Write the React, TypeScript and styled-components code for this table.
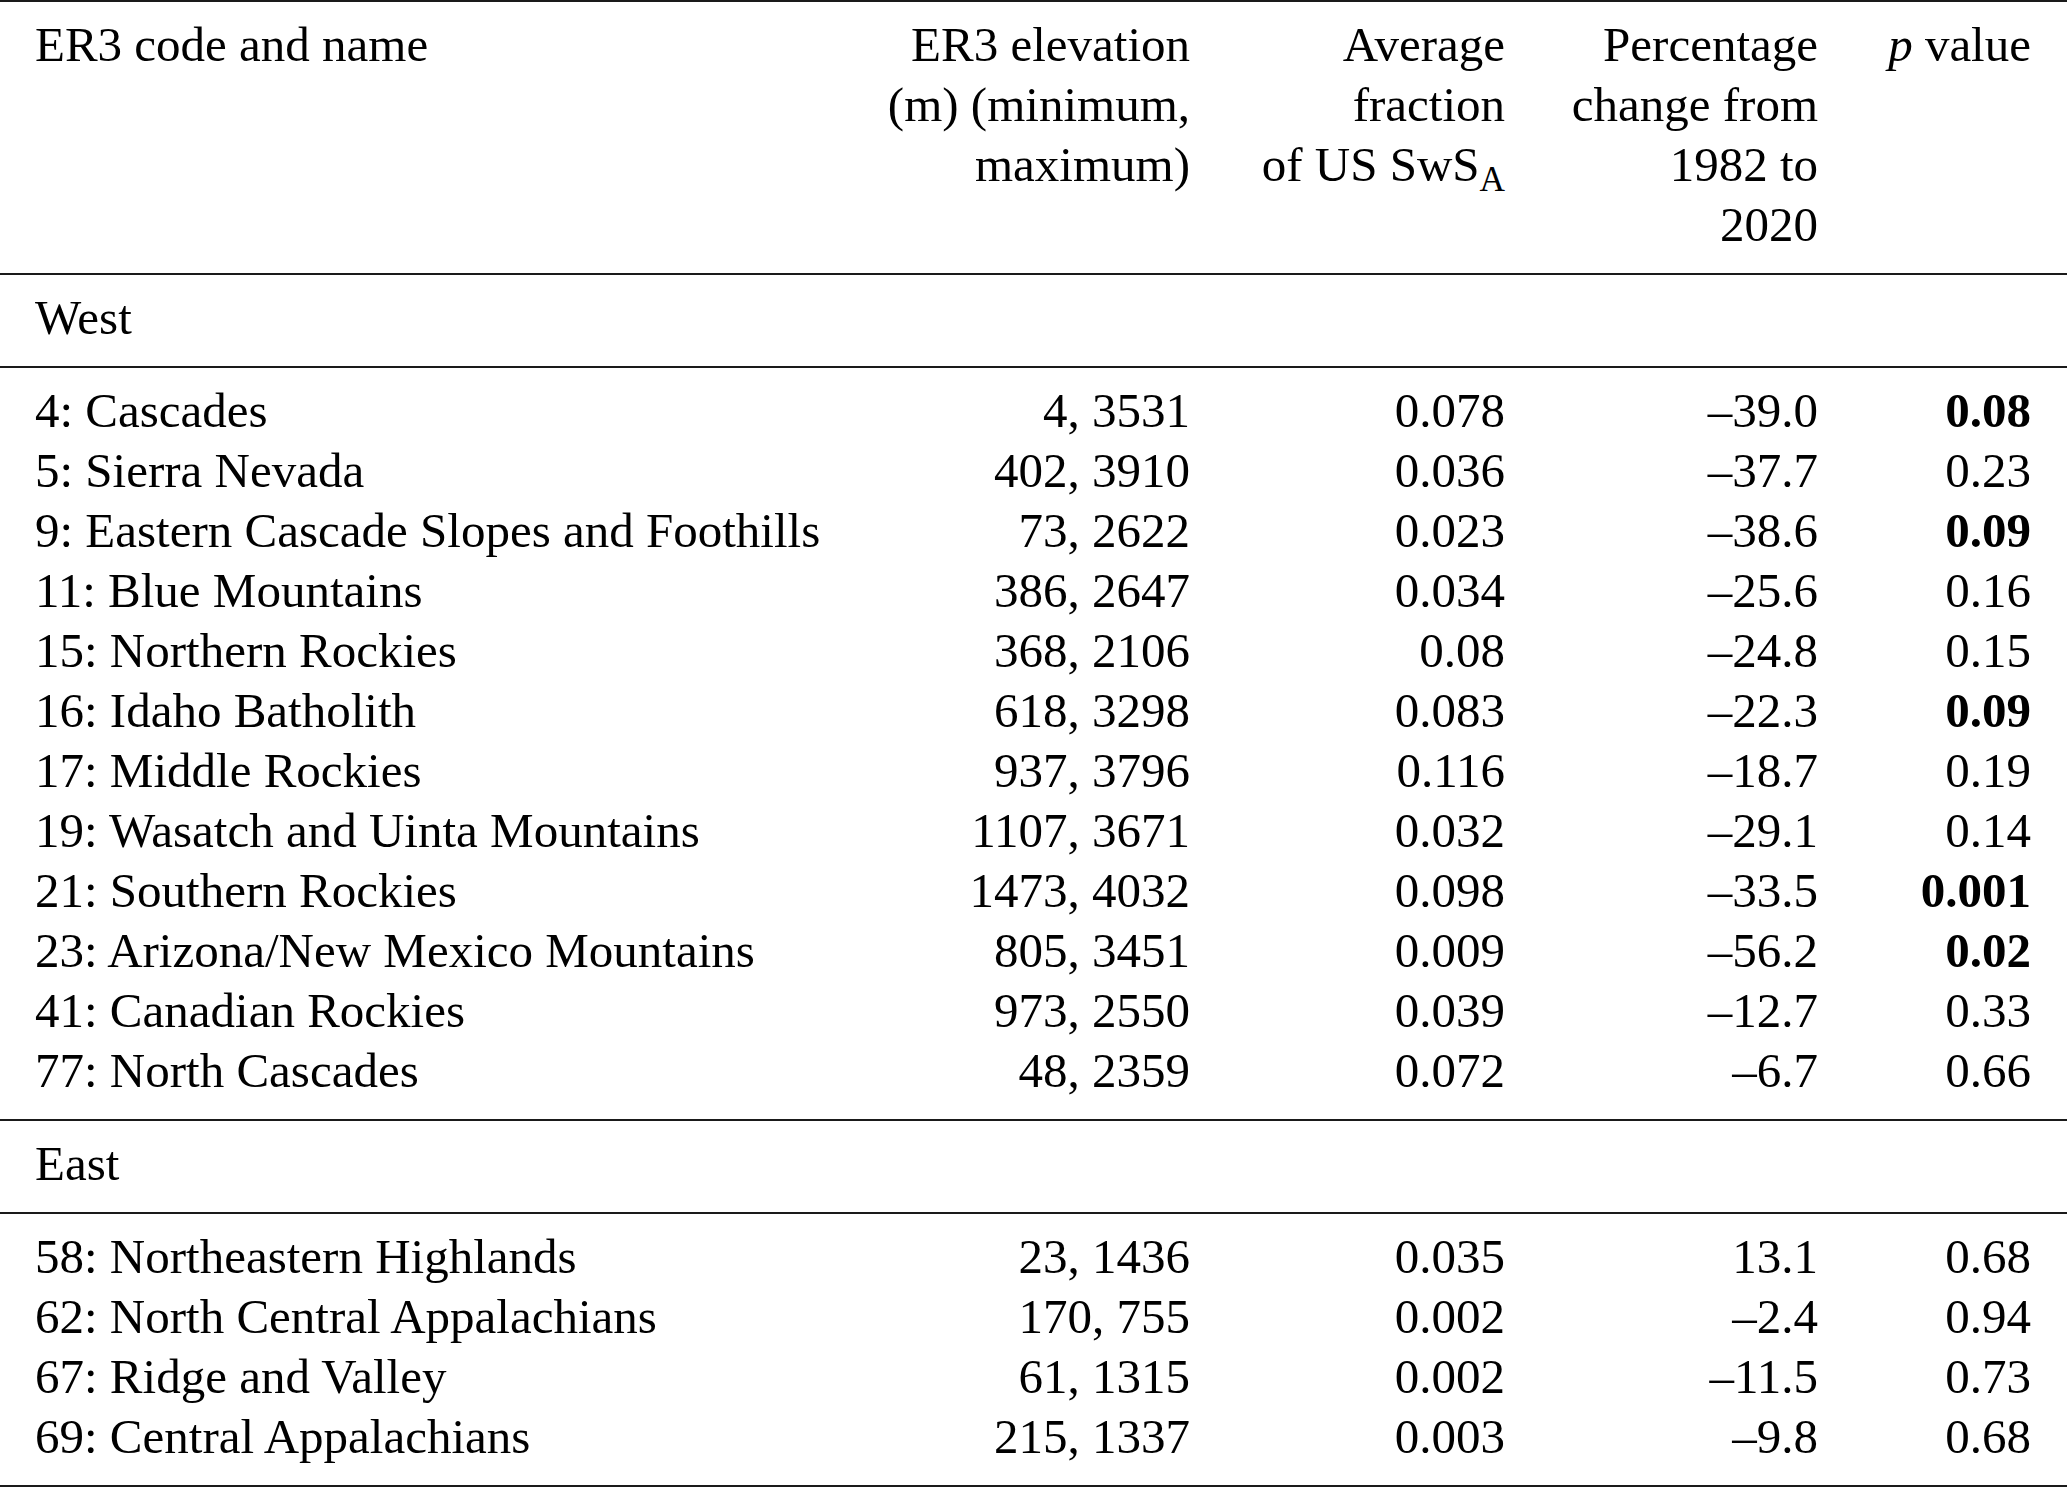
import React from "react";
import styled, { createGlobalStyle } from "styled-components";

const Global = createGlobalStyle`
  html, body { margin: 0; padding: 0; background: #ffffff; }
  body { font-family: "Liberation Serif", "Times New Roman", serif; color: #000; }
`;

const Table = styled.table`
  width: 2067px;
  border-collapse: collapse;
  table-layout: fixed;
  font-family: "Liberation Serif", "Times New Roman", serif;
  font-size: 49px;
  line-height: 60px;
  color: #000;
`;

const Col = styled.col<{ $w: number }>`
  width: ${(p) => p.$w}px;
`;

const Group = styled.tbody`
  border-top: 2px solid #1a1a1a;
  &:last-child {
    border-bottom: 2px solid #1a1a1a;
  }
`;

const Head = styled.thead`
  border-top: 2px solid #1a1a1a;
`;

const Cell = styled.td<{ $right?: boolean; $first?: boolean; $last?: boolean; $padTop?: boolean; $padBottom?: boolean; $bold?: boolean }>`
  padding: 0;
  padding-left: ${(p) => (p.$first ? "35px" : "0")};
  padding-right: ${(p) => (p.$last ? "36px" : "0")};
  padding-top: ${(p) => (p.$padTop ? "13px" : "0")};
  padding-bottom: ${(p) => (p.$padBottom ? "18px" : "0")};
  text-align: ${(p) => (p.$right ? "right" : "left")};
  font-weight: ${(p) => (p.$bold ? 700 : 400)};
  vertical-align: top;
  white-space: nowrap;
  height: 60px;
`;

const HeadCell = styled.th<{ $right?: boolean; $first?: boolean; $last?: boolean }>`
  padding: 13px 0 18px 0;
  padding-left: ${(p) => (p.$first ? "35px" : "0")};
  padding-right: ${(p) => (p.$last ? "36px" : "0")};
  text-align: ${(p) => (p.$right ? "right" : "left")};
  font-weight: 400;
  vertical-align: top;
  white-space: nowrap;
`;

const Italic = styled.i`
  font-style: italic;
`;

const Sub = styled.sub`
  font-size: 72%;
  vertical-align: -0.28em;
  line-height: 0;
`;

type Row = [string, string, string, string, string, boolean];

const west: Row[] = [
  ["4: Cascades", "4, 3531", "0.078", "–39.0", "0.08", true],
  ["5: Sierra Nevada", "402, 3910", "0.036", "–37.7", "0.23", false],
  ["9: Eastern Cascade Slopes and Foothills", "73, 2622", "0.023", "–38.6", "0.09", true],
  ["11: Blue Mountains", "386, 2647", "0.034", "–25.6", "0.16", false],
  ["15: Northern Rockies", "368, 2106", "0.08", "–24.8", "0.15", false],
  ["16: Idaho Batholith", "618, 3298", "0.083", "–22.3", "0.09", true],
  ["17: Middle Rockies", "937, 3796", "0.116", "–18.7", "0.19", false],
  ["19: Wasatch and Uinta Mountains", "1107, 3671", "0.032", "–29.1", "0.14", false],
  ["21: Southern Rockies", "1473, 4032", "0.098", "–33.5", "0.001", true],
  ["23: Arizona/New Mexico Mountains", "805, 3451", "0.009", "–56.2", "0.02", true],
  ["41: Canadian Rockies", "973, 2550", "0.039", "–12.7", "0.33", false],
  ["77: North Cascades", "48, 2359", "0.072", "–6.7", "0.66", false],
];

const east: Row[] = [
  ["58: Northeastern Highlands", "23, 1436", "0.035", "13.1", "0.68", false],
  ["62: North Central Appalachians", "170, 755", "0.002", "–2.4", "0.94", false],
  ["67: Ridge and Valley", "61, 1315", "0.002", "–11.5", "0.73", false],
  ["69: Central Appalachians", "215, 1337", "0.003", "–9.8", "0.68", false],
];

function DataRows({ rows }: { rows: Row[] }) {
  return (
    <>
      {rows.map((r, i) => {
        const t = i === 0;
        const b = i === rows.length - 1;
        return (
          <tr key={r[0]}>
            <Cell $first $padTop={t} $padBottom={b}>{r[0]}</Cell>
            <Cell $right $padTop={t} $padBottom={b}>{r[1]}</Cell>
            <Cell $right $padTop={t} $padBottom={b}>{r[2]}</Cell>
            <Cell $right $padTop={t} $padBottom={b}>{r[3]}</Cell>
            <Cell $right $last $padTop={t} $padBottom={b} $bold={r[5]}>{r[4]}</Cell>
          </tr>
        );
      })}
    </>
  );
}

function Section({ name }: { name: string }) {
  return (
    <Group>
      <tr>
        <Cell $first $padTop $padBottom colSpan={5}>{name}</Cell>
      </tr>
    </Group>
  );
}

export default function App() {
  return (
    <>
      <Global />
      <Table>
        <colgroup>
          <Col $w={860} />
          <Col $w={330} />
          <Col $w={315} />
          <Col $w={313} />
          <Col $w={249} />
        </colgroup>
        <Head>
          <tr>
            <HeadCell $first>ER3 code and name</HeadCell>
            <HeadCell $right>
              ER3 elevation
              <br />
              (m) (minimum,
              <br />
              maximum)
            </HeadCell>
            <HeadCell $right>
              Average
              <br />
              fraction
              <br />
              of US SwS<Sub>A</Sub>
            </HeadCell>
            <HeadCell $right>
              Percentage
              <br />
              change from
              <br />
              1982 to
              <br />
              2020
            </HeadCell>
            <HeadCell $right $last>
              <Italic>p</Italic> value
            </HeadCell>
          </tr>
        </Head>
        <Section name="West" />
        <Group>
          <DataRows rows={west} />
        </Group>
        <Section name="East" />
        <Group>
          <DataRows rows={east} />
        </Group>
      </Table>
    </>
  );
}
